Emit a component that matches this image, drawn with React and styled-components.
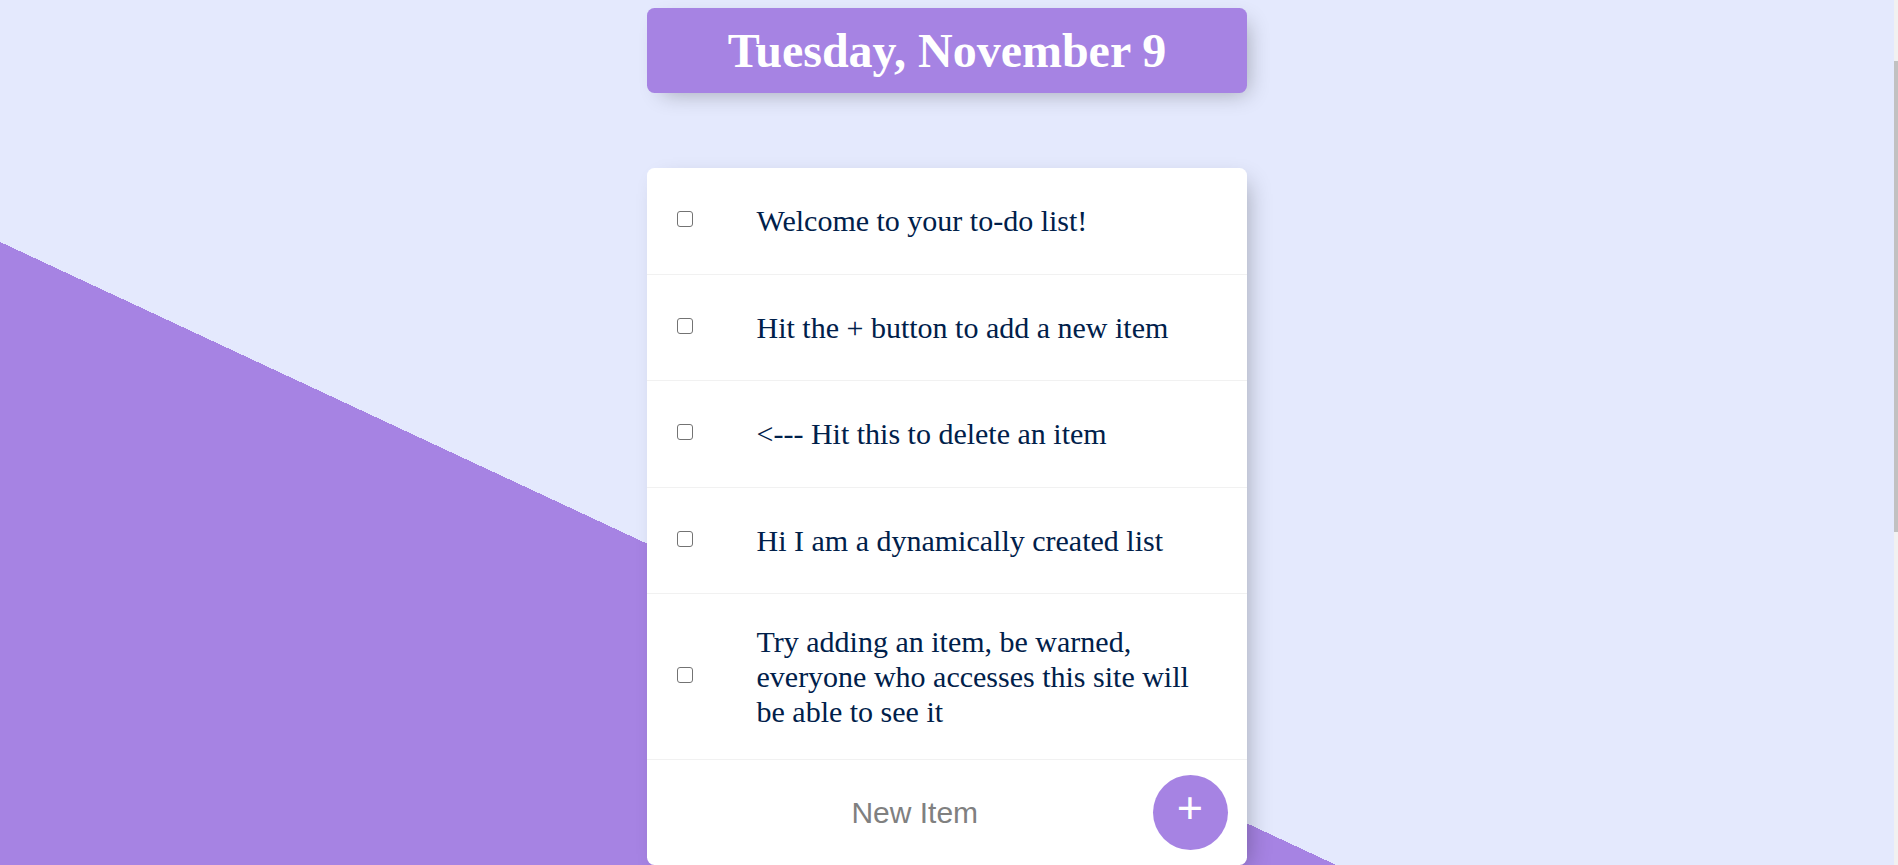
import React, { useState } from 'react';
import styled, { createGlobalStyle } from 'styled-components';

const GlobalStyle = createGlobalStyle`
  html {
    background: #e4e9fd linear-gradient(25deg, #a683e3 50%, #e4e9fd 50%) top left / calc(100% - 4px) 1367px no-repeat;
  }
  body {
    margin: 0;
    font-family: "Liberation Serif", "Times New Roman", serif;
  }
`;

// the page in the shot is scrolled, with a thin scrollbar at the right edge
const ScrollBar = styled.div`
  position: fixed;
  top: 0;
  right: 0;
  bottom: 0;
  width: 4px;
  background: #f1f1f1;

  &::after {
    content: '';
    position: absolute;
    top: 61px;
    left: 0;
    width: 100%;
    height: 471px;
    background: #c1c1c1;
  }
`;

const Page = styled.div`
  padding: 8px 4px 0 0;
`;

const Box = styled.div`
  width: 600px;
  margin: 0 auto ${(p) => (p.$heading ? '75px' : '0')};
  background: ${(p) => (p.$heading ? '#a683e3' : '#fff')};
  border-radius: 7.5px;
  box-shadow: 7.5px 7.5px 22.5px -7.5px rgba(0, 0, 0, 0.3);
  text-align: ${(p) => (p.$heading ? 'center' : 'left')};
`;

const Title = styled.h1`
  margin: 0;
  padding: 15px;
  font-family: "Liberation Serif", "Times New Roman", serif;
  font-size: 48px;
  font-weight: bold;
  color: #fff;
`;

const Item = styled.div`
  min-height: 105.5px;
  display: flex;
  align-items: center;
  border-bottom: 1px solid #f1f1f1;
`;

const Check = styled.input`
  appearance: none;
  flex: none;
  width: 16px;
  height: 16px;
  margin: 28px 33.5px 31px 30px;
  border: 1.5px solid #737373;
  border-radius: 3px;
  background: #fff;
  box-sizing: border-box;
  cursor: pointer;

  &:checked {
    background: #a683e3;
    border-color: #a683e3;
  }
`;

const ItemText = styled.p`
  margin: 0;
  padding: 30px;
  font-size: 30px;
  line-height: 35px;
  font-weight: 200;
  color: #00204a;
  text-decoration: ${(p) => (p.$done ? 'line-through #a683e3' : 'none')};
`;

const AddForm = styled.form`
  min-height: 105px;
  display: flex;
  align-items: center;
  margin-left: 30px;
  text-align: center;
`;

const NewItemInput = styled.input`
  width: 469.5px;
  height: 90px;
  padding: 1.5px 3px;
  border: none;
  background: transparent;
  text-align: center;
  font-family: "Liberation Sans", Arial, sans-serif;
  font-size: 30px;
  font-weight: 200;
  color: #00204a;

  &::placeholder {
    color: grey;
    opacity: 1;
  }
  &:focus {
    outline: none;
    box-shadow: inset 0 -4.5px 0 0 #a683e3;
  }
`;

const AddButton = styled.button`
  flex: none;
  width: 75px;
  min-height: 75px;
  padding: 0 0 9px;
  border: 0;
  border-radius: 50%;
  background: #a683e3;
  color: #fff;
  font-family: "Liberation Sans", Arial, sans-serif;
  font-size: 45px;
  line-height: 1.15;
  cursor: pointer;
`;

const initialItems = [
  'Welcome to your to-do list!',
  'Hit the + button to add a new item',
  '<--- Hit this to delete an item',
  'Hi I am a dynamically created list',
  'Try adding an item, be warned, everyone who accesses this site will be able to see it',
];

export default function App() {
  const [items, setItems] = useState(initialItems.map((text) => ({ text, done: false })));
  const [draft, setDraft] = useState('');

  const toggle = (idx) => {
    setItems(items.map((it, i) => (i === idx ? { ...it, done: !it.done } : it)));
  };

  const addItem = (e) => {
    e.preventDefault();
    if (!draft.trim()) return;
    setItems([...items, { text: draft, done: false }]);
    setDraft('');
  };

  return (
    <>
      <GlobalStyle />
      <Page>
        <Box $heading>
          <Title>Tuesday, November 9</Title>
        </Box>
        <Box>
          {items.map((item, idx) => (
            <Item key={idx}>
              <Check type="checkbox" checked={item.done} onChange={() => toggle(idx)} />
              <ItemText $done={item.done}>{item.text}</ItemText>
            </Item>
          ))}
          <AddForm onSubmit={addItem}>
            <NewItemInput
              type="text"
              placeholder="New Item"
              autoComplete="off"
              value={draft}
              onChange={(e) => setDraft(e.target.value)}
            />
            <AddButton type="submit">+</AddButton>
          </AddForm>
        </Box>
      </Page>
      <ScrollBar />
    </>
  );
}
